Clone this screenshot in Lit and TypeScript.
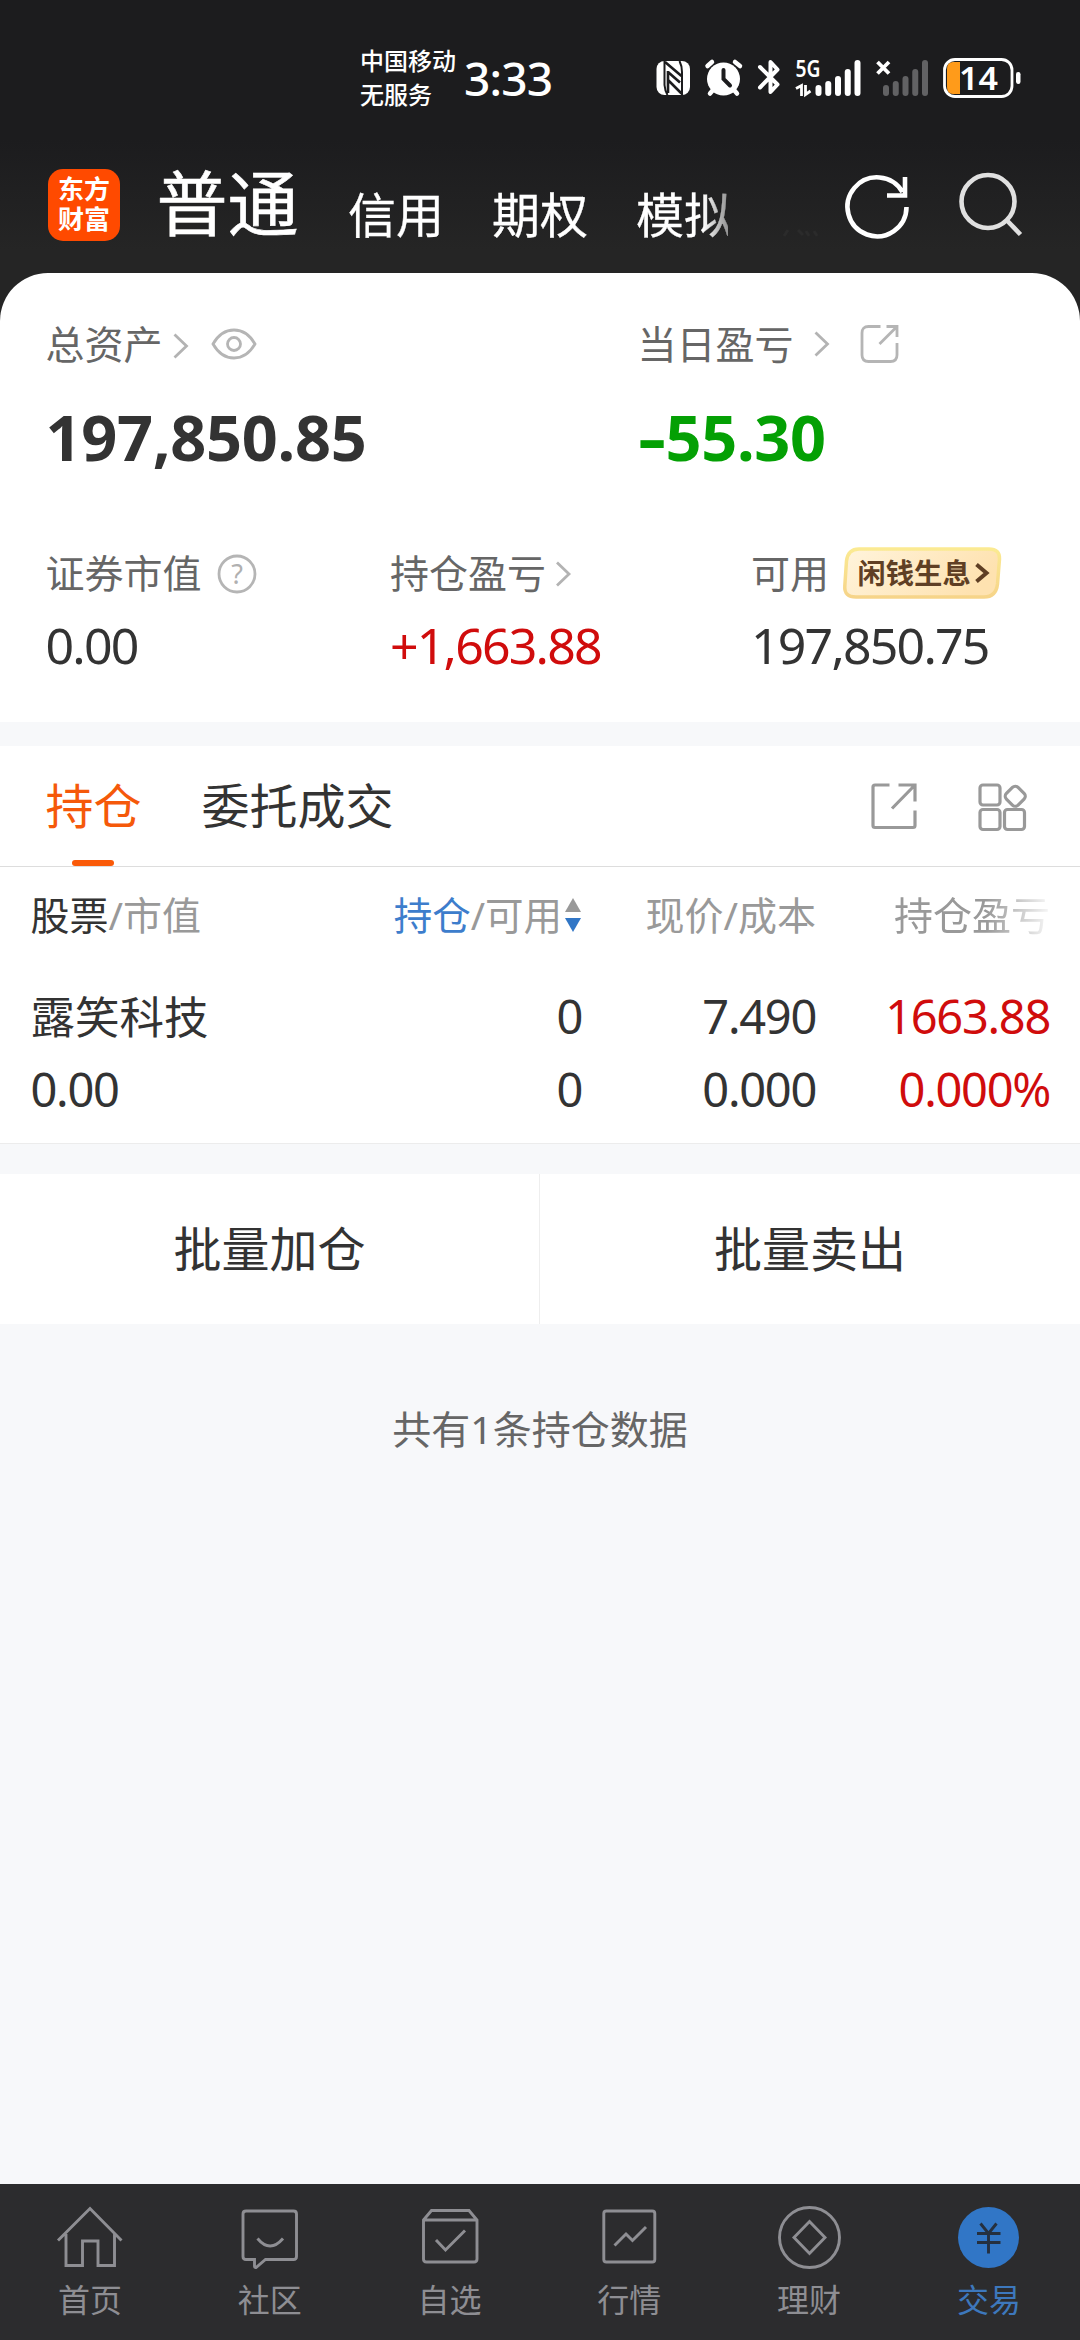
import { LitElement, html, css, svg } from "lit";
import { customElement } from "lit/decorators.js";

const barTops = [25, 21, 16, 9, 0];
const signalBars = (color: string) =>
  svg`${barTops.map((t, i) => svg`<rect x=${i * 9.75} y=${t} width="6" height=${36 - t} rx="3" fill=${color} />`)}`;

const navItems = [
  {
    label: "首页",
    icon: svg`<path d="M2 33.5 34 1.5 65.5 33.5M10 27V58.5H26.5V34H42V58.5H58.5V27" />`,
  },
  {
    label: "社区",
    icon: svg`<path d="M10 4H57.5Q60.5 4 60.5 7V49.5Q60.5 52.5 57.5 52.5H29.5L20 60.5Q18.5 60.5 18.5 59V52.5H10Q7 52.5 7 49.5V7Q7 4 10 4ZM21.5 31.5Q34 46.5 47 31.5" />`,
  },
  {
    label: "自选",
    icon: svg`<path d="M7.5 13 15.500 3.500H53L61 13V52Q61 55 58 55H10.500Q7.500 55 7.500 52ZM8 13H61M20 33 29.500 43 49 23.500" />`,
  },
  {
    label: "行情",
    icon: svg`<rect x="7.800" y="4" width="51" height="51" rx="2.500" /><path d="M18.500 38.500 30 27 36.500 33.500 50 20" />`,
  },
  {
    label: "理财",
    icon: svg`<circle cx="33.500" cy="30.500" r="30" /><path d="M33.500 14.500 49 30.500 33.500 46.500 18 30.500Z" />`,
  },
  {
    label: "交易",
    active: true,
    icon: svg`<circle cx="33.500" cy="30.500" r="30.500" fill="#3176c6" stroke="none" /><path stroke="#25303f" d="M25.500 16.500 33.500 26.500 41.500 16.500M22 26.500H45.500M22 35.500H45.500M33.500 26V46.500" />`,
  },
];

@customElement("app-root")
export class AppRoot extends LitElement {
  static styles = css`
    :host {
      display: flex;
      flex-direction: column;
      width: 1080px;
      height: 2340px;
      overflow: hidden;
      background: #f7f8fa;
      color: #333;
      font-family: "Noto Sans", "Noto Sans CJK SC", sans-serif;
      font-size: 39px;
      line-height: 60px;
      white-space: nowrap;
    }
    svg {
      display: block;
      flex: none;
      overflow: visible;
      fill: none;
    }
    .top {
      height: 321px;
      flex: none;
      margin-bottom: -48px;
      background: linear-gradient(#1c1c1e 0, #1c1c1e 140px, #252525 250px);
      color: #fff;
    }
    .status {
      display: flex;
      height: 110px;
      padding: 44px 0 0 360px;
      box-sizing: border-box;
    }
    .carrier {
      width: 104px;
      font-size: 24px;
      line-height: 34px;
      font-weight: 500;
    }
    .clock {
      width: 192px;
      font: 500 46px/68px "Noto Sans", sans-serif;
      letter-spacing: -0.8px;
    }
    .sys {
      margin-top: 14px;
    }
    .sys text {
      fill: #fff;
      font-family: "Noto Sans", sans-serif;
      font-weight: 600;
    }
    .header {
      display: flex;
      padding-left: 48px;
      height: 163px;
    }
    .logo {
      width: 72px;
      height: 72px;
      margin-top: 59px;
      padding-top: 6px;
      box-sizing: border-box;
      border-radius: 15px;
      background: #ff4a00;
      font: 700 26px/30px "Liberation Sans", "Noto Sans CJK SC", sans-serif;
      text-align: center;
    }
    .modes {
      display: flex;
      align-items: baseline;
      gap: 48px;
      width: 570px;
      margin-left: 38px;
      padding-top: 44px;
      box-sizing: border-box;
      font-size: 48px;
      line-height: 100px;
      mask-image: linear-gradient(90deg, #000 545px, rgba(0, 0, 0, 0.45) 573px);
    }
    .modes .cur {
      font-size: 71px;
      -webkit-text-stroke: 0.6px #fff;
    }
    .modes span {
      position: relative;
      top: 1.500px;
    }
    .modes .cur {
      top: -1px;
      left: -1.500px;
    }
    .modes .mode {
      -webkit-text-stroke: 0.3px #fff;
    }
    .more {
      margin: 118px 0 0 55px;
      stroke: #2b2b2b;
      stroke-width: 3;
    }
    .refresh {
      margin: 63px 0 0 28px;
      stroke: #fff;
      stroke-width: 4.600;
    }
    .search {
      margin: 62px 0 0 49px;
      stroke: #e0e0e0;
      stroke-width: 4.600;
    }
    .assets {
      height: 449px;
      flex: none;
      box-sizing: border-box;
      padding: 41px 0 0 45.5px;
      border-radius: 48px 48px 0 0;
      background: #fff;
      color: #333;
    }
    .row {
      display: grid;
    }
    .main {
      grid-template-columns: 592px 1fr;
      margin-bottom: 67px;
    }
    .sub {
      grid-template-columns: 344.500px 361px 1fr;
    }
    .lab {
      display: flex;
      align-items: center;
      color: #666;
    }
    .chev {
      stroke: #b3b3b3;
      stroke-width: 2.800;
    }
    .lite {
      stroke: #b5b5b5;
      stroke-width: 2.800;
    }
    .big {
      margin-top: 23px;
      margin-bottom: -1px;
      font-size: 63px;
      font-weight: 700;
      line-height: 80px;
      letter-spacing: -0.300px;
    }
    .minus {
      display: inline-block;
      width: 28px;
      transform: scaleX(1.4);
      transform-origin: 0 50%;
    }
    .val {
      margin-top: 11.500px;
      font-size: 50px;
      letter-spacing: -1.800px;
    }
    .green {
      color: #04a004;
    }
    .red {
      color: #d00c0c;
    }
    .help text {
      fill: #b0b0b0;
      stroke: none;
      font-size: 27px;
    }
    .badge {
      display: flex;
      align-items: center;
      position: relative;
      width: 158px;
      height: 52px;
      margin-left: 13.500px;
      padding-left: 15px;
      box-sizing: border-box;
      color: #5f3f24;
      font: 700 28.300px/50px "Noto Sans CJK SC", sans-serif;
    }
    .badge .plate {
      position: absolute;
      left: 0;
      top: 0;
    }
    .badge .txt {
      position: relative;
      margin-top: -3px;
    }
    .badge .go {
      position: relative;
      margin-left: 4px;
      stroke: #5f3f24;
      stroke-width: 4;
    }
    .tabs {
      display: flex;
      height: 121px;
      flex: none;
      margin-top: 24px;
      padding-left: 45.500px;
      box-sizing: border-box;
      border-bottom: 1px solid #ddd;
      background: #fff;
      font-size: 48px;
      line-height: 119px;
    }
    .tab {
      width: 156px;
    }
    .tab.on {
      color: #f5590a;
    }
    .tab.on::after {
      content: "";
      display: block;
      width: 42px;
      height: 6px;
      margin: -5px 0 0 26.500px;
      border-radius: 3px;
      background: #fa5a08;
    }
    .tools {
      display: flex;
      gap: 61px;
      margin: 37px 0 0 477.500px;
      stroke: #999;
      stroke-width: 3.200;
    }
    .table {
      height: 277px;
      flex: none;
      box-sizing: border-box;
      padding: 0 30px 0 30.500px;
      border-bottom: 1px solid #ececec;
      background: #fff;
    }
    .cols {
      display: grid;
      grid-template-columns: 1fr 234px 234px 234px;
      text-align: right;
    }
    .cols :first-child {
      text-align: left;
    }
    .th {
      line-height: 96px;
      margin-bottom: 17px;
      color: #999;
    }
    .dark {
      color: #333;
    }
    .blue {
      color: #3d7dcc;
    }
    .sort {
      display: flex;
      justify-content: flex-end;
      align-items: center;
      gap: 3px;
      padding-right: 1px;
      font-size: 38.500px;
    }
    .fade {
      mask-image: linear-gradient(90deg, #000 170px, rgba(0, 0, 0, 0.1) 232px);
    }
    .td {
      font-size: 47px;
      line-height: 73px;
      letter-spacing: -1.300px;
    }
    .name {
      font-size: 44.500px;
      letter-spacing: 0;
    }
    .batch {
      display: grid;
      grid-template-columns: 1fr 1fr;
      height: 150px;
      flex: none;
      margin-top: 30px;
      background: #fff;
      font-size: 48px;
      line-height: 149px;
      text-align: center;
    }
    .batch .first {
      border-right: 1px solid #eee;
    }
    .count {
      margin-top: 75px;
      color: #666;
      text-align: center;
    }
    .nav {
      display: grid;
      grid-template-columns: repeat(6, 179.800px);
      height: 156px;
      margin-top: auto;
      background: #2c2c2e;
      color: #8e8e93;
      font-size: 32px;
      line-height: 44px;
      text-align: center;
    }
    .nav svg {
      margin: 23px auto 10px;
      stroke: #8e8e93;
      stroke-width: 2.900;
    }
    .nav .active {
      color: #3d78bd;
    }
  `;

  private statusIcons() {
    return html`<svg class="sys" width="366" height="40" viewBox="0 0 366 40">
      <rect x="0.500" y="3" width="33.500" height="34" rx="8" fill="#fff" />
      <path stroke="#1c1c1e" stroke-width="2" d="M8.500 3V27Q9 33 11.500 37M26 37V14Q26 8 23.500 3" />
      <path stroke="#1c1c1e" stroke-width="2.600" d="M9 4 25.500 18M12 13V35M12 14 24 24.500M12 22 25.500 35.500" />
      <circle cx="67.500" cy="21" r="16.500" fill="#fff" />
      <path stroke="#fff" stroke-width="4.500" stroke-linecap="round" d="M51.500 8 56 4M79 4 84 8M57 32 54 35.500M78 32 81 35.500" />
      <path stroke="#1c1c1e" stroke-width="4" stroke-linecap="round" d="M67.500 12V21L74 27.500" />
      <path stroke="#fff" stroke-width="4" stroke-linejoin="round" stroke-linecap="round" d="M104 9 121.500 26.500 114.500 34V4L121.500 11.500 104 29.500" />
      <text x="139.500" y="18.500" font-size="23" textLength="25" lengthAdjust="spacingAndGlyphs">5G</text>
      <path stroke="#fff" stroke-width="2.800" d="M140 30.500 145.500 27.500V38M149.500 27V36.500L154.500 33" />
      <g transform="translate(159.500 2)">${signalBars("#fff")}</g>
      <path stroke="#fff" stroke-width="3.800" d="M221.500 4 233 15.500M233 4 221.500 15.500" />
      <g transform="translate(227 2)">${signalBars("#626264")}</g>
      <path fill="#ff9b1a" d="M304 4V36H297Q291 36 291 29V11Q291 4 297 4Z" />
      <rect x="288.500" y="1.500" width="67.500" height="37" rx="10.500" stroke="#fff" stroke-width="2.800" />
      <rect x="360" y="14" width="4.500" height="12" rx="2.200" fill="#fff" />
      <text x="303" y="32" font-size="33" textLength="39" lengthAdjust="spacingAndGlyphs">14</text>
    </svg>`;
  }

  private header() {
    return html`<div class="top">
      <div class="status">
        <div class="carrier"><div>中国移动</div><div>无服务</div></div>
        <div class="clock">3:33</div>
        ${this.statusIcons()}
      </div>
      <div class="header">
        <div class="logo"><div>东方</div><div>财富</div></div>
        <div class="modes">
          <span class="cur">普通</span><span class="mode">信用</span><span class="mode">期权</span><span class="mode">模拟</span>
        </div>
        <svg class="more" width="35" height="9" viewBox="0 0 35 9"><path d="M1 8 5 2M15 2 20 7M26 8 23 3M31 3 34 8" /></svg>
        <svg class="refresh" width="64" height="66" viewBox="0 0 64 66">
          <path d="M60.500 34A29.500 29.500 0 1 1 56.500 19M59 4V22.500H41" />
        </svg>
        <svg class="search" width="64" height="66" viewBox="0 0 64 66">
          <circle cx="29" cy="29.500" r="26.500" /><path d="M48 48.500 61.500 62.500" />
        </svg>
      </div>
    </div>`;
  }

  private assets() {
    return html`<div class="assets">
      <div class="row main">
        <div>
          <div class="lab">
            总资产
            <svg class="chev" width="16" height="26" viewBox="-10 -2 16 26"><path d="M1.500 1.500 13.500 13 1.500 24.500" /></svg>
            <svg class="lite" width="46" height="32" viewBox="-32 0 46 32">
              <path d="M2 16Q10 2 23 2T44 16Q36 30 23 30T2 16Z" /><circle cx="23" cy="16" r="6.500" />
            </svg>
          </div>
          <div class="big">197,850.85</div>
        </div>
        <div>
          <div class="lab">
            当日盈亏
            <svg class="chev" width="16" height="26" viewBox="-20 0 16 26"><path d="M1.500 1.500 13.500 13 1.500 24.500" /></svg>
            <svg class="lite" width="38" height="38" viewBox="-50.500 0 38 38">
              <path d="M20 1.500H8Q1.500 1.500 1.500 8V30Q1.500 36.500 8 36.500H30Q36.500 36.500 36.500 30V18M26 1.500H36.500V12M36 2 19 19" />
            </svg>
          </div>
          <div class="big green"><span class="minus">-</span>55.30</div>
        </div>
      </div>
      <div class="row sub">
        <div>
          <div class="lab">
            证券市值
            <svg class="lite help" width="40" height="40" viewBox="-15 -1 40 40">
              <circle cx="20" cy="20" r="18" /><text x="20" y="29.500" text-anchor="middle">?</text>
            </svg>
          </div>
          <div class="val">0.00</div>
        </div>
        <div>
          <div class="lab">持仓盈亏<svg class="chev" width="16" height="26" viewBox="-9.500 -1 16 26"><path d="M1.500 1.500 13.500 13 1.500 24.500" /></svg></div>
          <div class="val red">+1,663.88</div>
        </div>
        <div>
          <div class="lab">
            可用
            <div class="badge">
              <svg class="plate" width="158" height="52" viewBox="0 0 158 52">
                <defs>
                  <linearGradient id="edge" x1="0" y1="0" x2="0" y2="1"><stop offset="0" stop-color="#fbea92" /><stop offset="1" stop-color="#f6d489" /></linearGradient>
                  <linearGradient id="face" x1="0" y1="0" x2="1" y2="0.300"><stop offset="0" stop-color="#fff4dc" /><stop offset="1" stop-color="#fee2b0" /></linearGradient>
                </defs>
                <path fill="url(#face)" stroke="url(#edge)" stroke-width="3.500" d="M16 2H146Q157 2 156.500 12L154.500 37Q153 50 141 50H13Q1 50 1.800 39L3.500 14Q5 2 16 2Z" />
              </svg>
              <span class="txt">闲钱生息</span>
              <svg class="go" width="14" height="20" viewBox="0 0 14 20"><path d="M1.500 1.500 11.500 10 1.500 18.500" /></svg>
            </div>
          </div>
          <div class="val">197,850.75</div>
        </div>
      </div>
    </div>`;
  }

  private holdings() {
    return html`<div class="tabs">
        <div class="tab on">持仓</div>
        <div>委托成交</div>
        <div class="tools">
          <svg width="46" height="46" viewBox="0 0 46 46">
            <path d="M18.500 2H4Q2 2 2 4V42.500Q2 44.500 4 44.500H42Q44 44.500 44 42.500V27.500M27.500 2H44V18.500M43.500 2.500 21 25.500" />
          </svg>
          <svg width="49" height="48" viewBox="0 0 49 48">
            <rect x="2" y="2" width="20" height="20" rx="3" /><rect x="2" y="26.500" width="20" height="20" rx="3" /><rect x="26.500" y="26.500" width="20" height="20" rx="3" />
            <rect x="29" y="5" width="16.500" height="16.500" rx="4" transform="rotate(45 37.250 13.250)" />
          </svg>
        </div>
      </div>
      <div class="table">
        <div class="cols th">
          <div><span class="dark">股票</span>/市值</div>
          <div class="sort">
            <div><span class="blue">持仓</span>/可用</div>
            <svg width="16" height="34" viewBox="0 0 16 34"><path fill="#999" d="M8 0 16 14H0Z" /><path fill="#3176c6" d="M8 34 0 20H16Z" /></svg>
          </div>
          <div>现价/成本</div>
          <div class="fade">持仓盈亏</div>
        </div>
        <div class="cols td">
          <div class="name">露笑科技</div><div>0</div><div>7.490</div><div class="red">1663.88</div>
        </div>
        <div class="cols td">
          <div>0.00</div><div>0</div><div>0.000</div><div class="red">0.000%</div>
        </div>
      </div>`;
  }

  render() {
    return html`${this.header()}${this.assets()}${this.holdings()}
      <div class="batch"><div class="first">批量加仓</div><div>批量卖出</div></div>
      <div class="count">共有1条持仓数据</div>
      <div class="nav">
        ${navItems.map(
          (n) => html`<div class=${n.active ? "active" : ""}>
            <svg width="67" height="61" viewBox="0 0 67 61">${n.icon}</svg>
            ${n.label}
          </div>`
        )}
      </div>`;
  }
}
